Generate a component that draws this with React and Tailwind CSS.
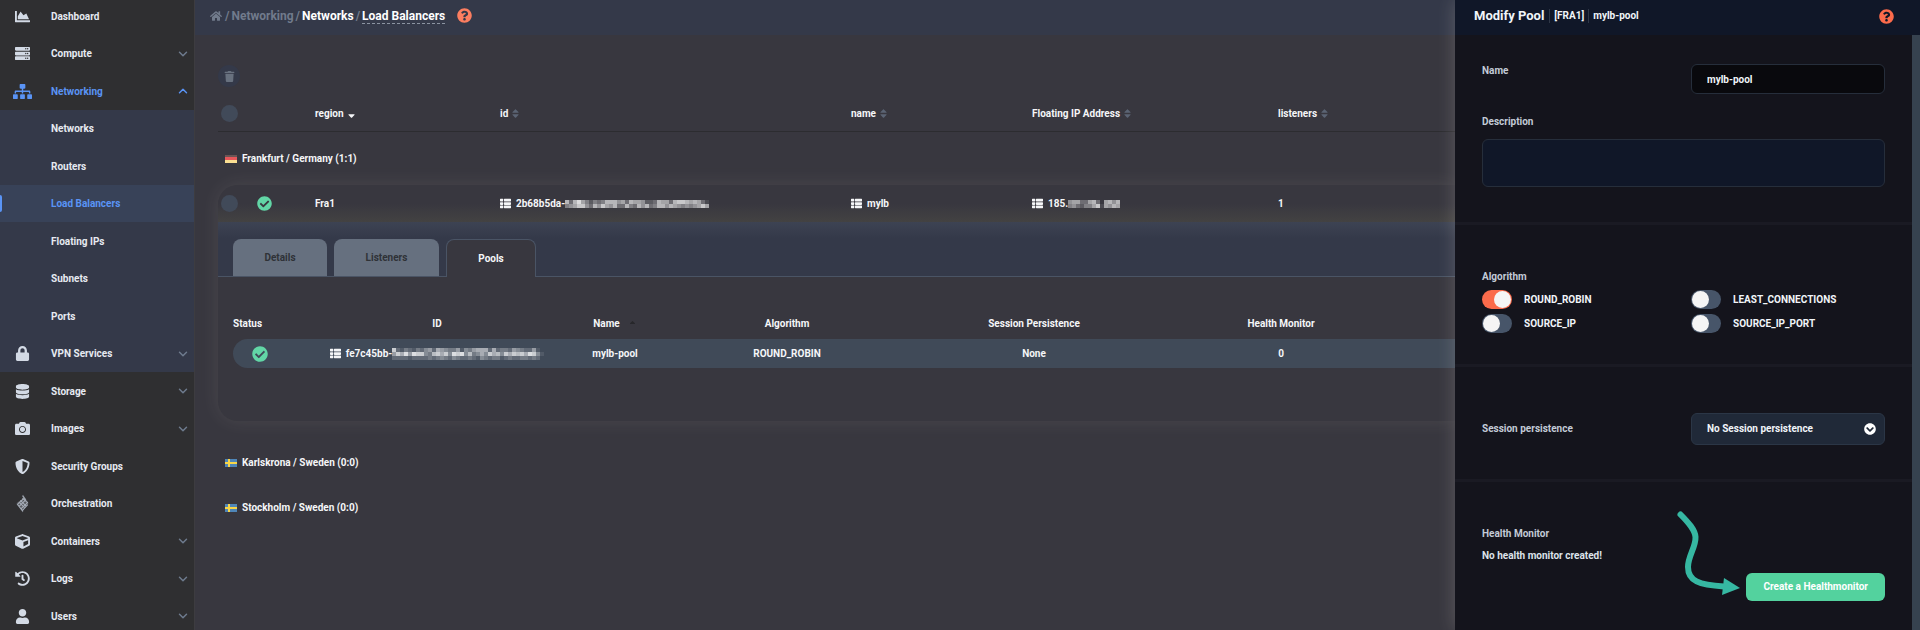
import React from "react";
import {
  FaCamera,
  FaChartArea,
  FaCheckCircle,
  FaChevronCircleDown,
  FaCube,
  FaDatabase,
  FaHistory,
  FaHome,
  FaLock,
  FaQuestionCircle,
  FaServer,
  FaShieldAlt,
  FaSitemap,
  FaSort,
  FaSortDown,
  FaSortUp,
  FaThList,
  FaTrash,
  FaUser,
} from "react-icons/fa";
import { ChevronDown, ChevronUp } from "lucide-react";

/* Woven diamond mark used for orchestration. */
function Weave({ className }) {
  return (
    <svg viewBox="0 0 24 36" className={className} fill="none" stroke="currentColor" strokeWidth="2">
      <path d="M13 1 L13 9 L1 17 L1 20 L12 34 L13 35 L13 28 L23 19 L23 16 Z" fill="currentColor" fillOpacity=".35" stroke="none" />
      <path d="M12 3 L18 11 M12 8 L22 17 M8 12 L19 23 M5 15 L16 26 M2 19 L13 33" />
      <path d="M14 9 L3 19 M18 11 L6 23 M22 16 L9 28 M22 20 L12 31" />
    </svg>
  );
}

const NAV = [
  { label: "Dashboard", Icon: FaChartArea },
  { label: "Compute", Icon: FaServer, arrow: "down" },
  { label: "Networking", Icon: FaSitemap, arrow: "up", open: true },
  { label: "Networks", group: true },
  { label: "Routers", group: true },
  { label: "Load Balancers", group: true, current: true },
  { label: "Floating IPs", group: true },
  { label: "Subnets", group: true },
  { label: "Ports", group: true },
  { label: "VPN Services", Icon: FaLock, arrow: "down", group: true },
  { label: "Storage", Icon: FaDatabase, arrow: "down" },
  { label: "Images", Icon: FaCamera, arrow: "down" },
  { label: "Security Groups", Icon: FaShieldAlt },
  { label: "Orchestration", Icon: Weave },
  { label: "Containers", Icon: FaCube, arrow: "down" },
  { label: "Logs", Icon: FaHistory, arrow: "down" },
  { label: "Users", Icon: FaUser, arrow: "down" },
];

function Sidebar() {
  return (
    <nav className="w-[195px] shrink-0 overflow-hidden border-r border-[#3d3c40] bg-[#2f2f31]">
      <ul className="-mt-[3px]">
        {NAV.map(({ label, Icon, arrow, open, group, current }) => (
          <li
            key={label}
            className={`odd:h-[38px] even:h-[37px] ${current ? "bg-[#384258]" : group ? "bg-[#343949]" : ""}`}
          >
            <a
              href="#"
              className={`relative flex h-full items-center pr-[4px] ${open || current ? "text-[#5a94f5]" : "text-[#e6eaf1]"}`}
            >
              {current && <span className="absolute bottom-[10px] left-0 h-[17px] w-[2px] rounded-r bg-[#5a94f5]" />}
              <span className={`flex w-[45px] justify-center ${open ? "" : "text-[#d3dae5]"}`}>
                {Icon &&
                  (Icon === Weave ? (
                    <Weave className="h-[19px] w-[13px] text-[#a6adb8]" />
                  ) : (
                    <Icon className={open ? "size-[19px]" : "size-[15px]"} />
                  ))}
              </span>
              <span className="grow pt-px pl-[6px]">{label}</span>
              {arrow === "down" && <ChevronDown className="size-[14px] text-[#6e7b8e]" strokeWidth={2.5} />}
              {arrow === "up" && <ChevronUp className="size-[14px]" strokeWidth={2.5} />}
            </a>
          </li>
        ))}
      </ul>
    </nav>
  );
}

const ID_MASK = [
  [7, 3, 7, 9, 6, 4, 2, 4, 3, 4, 7, 7, 7, 5, 6, 3, 7, 6, 6, 5, 2, 2, 3, 7, 6, 6, 3, 7, 8, 8, 7, 6, 7, 6, 3, 1],
  [4, 5, 6, 8, 8, 5, 3, 7, 5, 8, 6, 5, 7, 3, 3, 7, 4, 3, 7, 5, 7, 3, 4, 7, 7, 5, 7, 6, 5, 4, 5, 4, 5, 6, 8, 6],
];
const POOL_MASK = [
  [8, 2, 1, 3, 2, 1, 3, 2, 4, 5, 2, 6, 5, 4, 3, 3, 5, 1, 4, 3, 5, 6, 6, 6, 2, 6, 2, 3, 3, 2, 5, 4, 3, 2, 2, 5, 1, 0],
  [5, 8, 6, 9, 5, 9, 8, 8, 4, 3, 7, 8, 6, 8, 4, 9, 8, 9, 4, 7, 3, 4, 6, 4, 8, 6, 7, 4, 8, 6, 8, 7, 8, 6, 9, 8, 4, 1],
  [2, 2, 2, 2, 1, 2, 2, 2, 2, 3, 2, 3, 4, 3, 2, 4, 3, 2, 2, 3, 2, 1, 4, 3, 2, 3, 3, 1, 2, 3, 2, 2, 3, 3, 2, 3, 2, 0],
];
const IP_MASK = [
  [5, 6, 6, 3, 3, 6, 7, 3, 0, 6, 7, 5, 7],
  [4, 5, 3, 2, 4, 4, 6, 8, 1, 6, 5, 7, 6],
];

/* Coarse blocks that hide the private tail of an address. */
function Mask({ rows, cell }) {
  const cols = rows[0].length;
  return (
    <svg width={cols * cell} height={rows.length * 4} className="shrink-0" aria-hidden="true" shapeRendering="crispEdges">
      {rows.map((row, y) =>
        row.map((v, x) => (
          <rect key={`${y}-${x}`} x={x * cell} y={y * 4} width={cell} height={4} fill="#fff" opacity={v / 11} />
        ))
      )}
    </svg>
  );
}

const GRID = "grid grid-cols-[36px_61px_185fr_351fr_181fr_246fr_177fr] items-center";
const POOL_GRID = "grid grid-cols-[53px_302fr_54fr_290fr_204fr_290fr_29fr] items-center";

function Flag({ country }) {
  return country === "de" ? (
    <svg width="12" height="8" viewBox="0 0 12 8">
      <rect width="12" height="3" fill="#6b5555" />
      <rect y="2" width="12" height="4" fill="#e8575a" />
      <rect y="5" width="12" height="3" fill="#fbdf92" />
    </svg>
  ) : (
    <svg width="12" height="8" viewBox="0 0 12 8">
      <rect width="12" height="8" fill="#4f86b8" />
      <path d="M3 0h2v3h7v2H5v3H3V5H0V3h3z" fill="#f8d648" />
    </svg>
  );
}

function GroupRow({ country, children }) {
  return (
    <tr className="flex h-[45px] items-center">
      <th className="flex items-center gap-[5px] pl-[7px] font-[inherit]">
        <Flag country={country} />
        {children}
      </th>
    </tr>
  );
}

function SortHead({ children, active }) {
  return (
    <th className="text-left font-[inherit]">
      <button className="flex items-center gap-[2px]">
        {children}
        {active ? <FaSortDown className="size-[11px]" /> : <FaSort className="size-[11px] text-[#5b6474]" />}
      </button>
    </th>
  );
}

function Tick({ label }) {
  return (
    <input
      type="checkbox"
      aria-label={label}
      className="ml-[3px] block size-[17px] appearance-none rounded-full bg-[#414a59]"
    />
  );
}

function LinkCell({ text, rows, cell }) {
  return (
    <a href="#" className="flex items-center gap-[5px]">
      <FaThList className="size-[11px]" />
      <span className="flex items-center">
        {text}
        {rows && <Mask rows={rows} cell={cell} />}
      </span>
    </a>
  );
}

function Pools() {
  return (
    <>
      <div
        role="tablist"
        className="flex h-[55px] items-end gap-[7px] border-b border-[#4a5465] bg-linear-to-b from-[#3d4353] to-[#343949] to-30% pl-[15px]"
      >
        <button role="tab" className="h-[37px] w-[94px] rounded-t-lg bg-[#66707f] text-[#2f3237]">
          Details
        </button>
        <button role="tab" className="h-[37px] w-[105px] rounded-t-lg bg-[#66707f] text-[#2f3237]">
          Listeners
        </button>
        <button
          role="tab"
          aria-selected="true"
          className="-mb-px h-[38px] w-[90px] rounded-t-lg border border-b-0 border-[#4a5465] bg-[#38373f]"
        >
          Pools
        </button>
      </div>
      <div className="pt-[40px] pb-[53px] pl-[15px]">
        <table className="block text-center">
          <thead className="block">
            <tr className={`${POOL_GRID} h-[22px] items-start leading-[14px]`}>
              <th className="text-left font-[inherit]">Status</th>
              <th className="font-[inherit]">ID</th>
              <th className="flex justify-center gap-[8px] font-[inherit]">
                Name
                <FaSortUp className="mt-[3px] size-[9px] text-[#27272b]" />
              </th>
              <th className="font-[inherit]">Algorithm</th>
              <th className="font-[inherit]">Session Persistence</th>
              <th className="font-[inherit]">Health Monitor</th>
            </tr>
          </thead>
          <tbody className="block">
            <tr className={`${POOL_GRID} h-[29px] rounded-l-full bg-[#404a58]`}>
              <td className="flex justify-center">
                <FaCheckCircle className="size-4 text-[#62d6a6]" />
              </td>
              <td className="flex justify-center">
                <LinkCell text="fe7c45bb-" rows={POOL_MASK} cell={4} />
              </td>
              <td className="whitespace-nowrap">mylb-pool</td>
              <td>ROUND_ROBIN</td>
              <td>None</td>
              <td>0</td>
            </tr>
          </tbody>
        </table>
      </div>
    </>
  );
}

function Main() {
  return (
    <main className="min-w-0 grow overflow-hidden bg-[#38373f]">
      <header className="flex h-[35px] items-center bg-[#343949] pb-[4px] pl-[15px] text-[12px]">
        <nav className="flex items-center gap-[2px] text-[#717b8c]">
          <FaHome className="mr-px size-[12px]" />
          <span>/</span>
          <a href="#">Networking</a>
          <span>/</span>
          <a href="#" className="text-white">Networks</a>
          <span>/</span>
          <a href="#" className="-mb-px border-b border-dashed border-[#8b93a1] text-white">Load Balancers</a>
        </nav>
        <button aria-label="Help" className="ml-[12px]">
          <FaQuestionCircle className="size-[15px] text-[#fc7e60]" />
        </button>
      </header>

      <div className="pt-[30px] pl-[23px]">
        <button aria-label="Delete" className="flex size-[22px] items-center justify-center rounded-full bg-[#343949]">
          <FaTrash className="size-[11px] text-[#68717f]" />
        </button>

        <table className="mt-[9px] block">
          <thead className="block">
            <tr className={`${GRID} h-[36px] border-b border-[#2c2c30]`}>
              <td>
                <Tick label="Select all" />
              </td>
              <td />
              <SortHead active>region</SortHead>
              <SortHead>id</SortHead>
              <SortHead>name</SortHead>
              <SortHead>Floating IP Address</SortHead>
              <SortHead>listeners</SortHead>
            </tr>
          </thead>
          <tbody className="block pt-[4px] pb-[4px]">
            <GroupRow country="de">Frankfurt / Germany (1:1)</GroupRow>
          </tbody>
          <tbody className="block overflow-visible rounded-l-[20px] bg-[#38373f] shadow-[0_0_20px_rgba(255,240,220,0.09)]">
            <tr className={`${GRID} h-[37px] rounded-tl-[20px] bg-linear-to-b from-[#38373f] from-50% to-[#434242]`}>
              <td>
                <Tick label="Select mylb" />
              </td>
              <td>
                <FaCheckCircle className="ml-[3px] size-[15px] text-[#62d6a6]" />
              </td>
              <td>Fra1</td>
              <td>
                <LinkCell text="2b68b5da-" rows={ID_MASK} cell={4} />
              </td>
              <td>
                <LinkCell text="mylb" />
              </td>
              <td>
                <LinkCell text="185." rows={IP_MASK} cell={4} />
              </td>
              <td>1</td>
            </tr>
            <tr className="block">
              <td className="block">
                <Pools />
              </td>
            </tr>
          </tbody>
          <tbody className="block pt-[19px]">
            <GroupRow country="se">Karlskrona / Sweden (0:0)</GroupRow>
            <GroupRow country="se">Stockholm / Sweden (0:0)</GroupRow>
          </tbody>
        </table>
      </div>
    </main>
  );
}

function Toggle({ label, on }) {
  return (
    <label className="flex items-center gap-[12px]">
      <input
        type="checkbox"
        defaultChecked={on}
        className="block h-[19px] w-[30px] appearance-none rounded-full bg-[#475569] p-px before:block before:size-[17px] before:rounded-full before:bg-[#f5f5f5] before:content-[''] checked:bg-[#fb6b4b] checked:before:ml-[11px]"
      />
      {label}
    </label>
  );
}

function Drawer() {
  return (
    <aside className="relative z-10 flex w-[465px] shrink-0 flex-col bg-[#14141c] leading-[14px] text-[#f1f5f9] shadow-[0_0_18px_rgba(255,245,230,0.2)]">
      <header className="flex h-[35px] shrink-0 items-center bg-[#101728] pr-[26px] pb-[3px] pl-[19px]">
        <h1 className="pr-[5px] text-[13px]">Modify Pool</h1>
        <span className="border-l border-[#2f3747] px-[4px]">[FRA1]</span>
        <span className="border-l border-[#2f3747] px-[4px]">mylb-pool</span>
        <button aria-label="Help" className="ml-auto">
          <FaQuestionCircle className="size-[15px] text-[#fc6b4b]" />
        </button>
      </header>
      <div className="flex min-h-0 grow">
        <form className="min-w-0 grow overflow-hidden text-[#f1f5f9]">
          <section className="border-b-[3px] border-[#1a1a23] px-[27px] pt-[29px] pb-[35px]">
            <div className="grid grid-cols-2 gap-x-[15px]">
              <label htmlFor="pool-name" className="text-[#c3cbd7]">Name</label>
              <input
                id="pool-name"
                defaultValue="mylb-pool"
                className="h-[30px] min-w-0 rounded-md border border-[#262e3b] bg-[#09090d] px-[15px]"
              />
            </div>
            <label htmlFor="pool-description" className="mt-[21px] block text-[#c3cbd7]">Description</label>
            <textarea
              id="pool-description"
              className="mt-[10px] block h-[48px] w-full resize-none rounded-md border border-[#262e3b] bg-[#101728] px-[15px]"
            />
          </section>

          <section className="border-b-[3px] border-[#1a1a23] px-[27px] pt-[45px] pb-[31px]">
            <h2 className="text-[#c3cbd7]">Algorithm</h2>
            <div className="mt-[6px] grid grid-cols-2 gap-x-[15px] gap-y-[5px]">
              <Toggle label="ROUND_ROBIN" on />
              <Toggle label="LEAST_CONNECTIONS" />
              <Toggle label="SOURCE_IP" />
              <Toggle label="SOURCE_IP_PORT" />
            </div>
          </section>

          <section className="grid grid-cols-2 items-center gap-x-[15px] border-b-[3px] border-[#1a1a23] px-[27px] pt-[46px] pb-[34px]">
            <label htmlFor="session" className="text-[#c3cbd7]">Session persistence</label>
            <span className="relative flex items-center">
              <select
                id="session"
                className="h-[32px] w-full appearance-none rounded-md border border-[#2b3646] bg-[#202938] px-[15px]"
              >
                <option>No Session persistence</option>
              </select>
              <FaChevronCircleDown className="pointer-events-none absolute right-[9px] size-[12px] text-white" />
            </span>
          </section>

          <section className="flex flex-col px-[27px] pt-[45px]">
            <h2 className="text-[#c3cbd7]">Health Monitor</h2>
            <p className="mt-[8px] text-[#dde3ea]">No health monitor created!</p>
            <button
              type="button"
              className="relative mt-[10px] h-[28px] self-end rounded-md bg-[#53d29e] px-[17px] text-white"
            >
              Create a Healthmonitor
              <svg
                viewBox="0 0 66 86"
                className="absolute right-full bottom-[6px] mr-[5px] h-[86px] w-[66px]"
                fill="none"
                stroke="#36b8a2"
                aria-hidden="true"
              >
                <path
                  d="M5.500 5.500C14 14 20 21 20.500 28C21 38 13 47 13 58C13 72 24 76 49 77.500"
                  strokeWidth="6"
                  strokeLinecap="round"
                />
                <path d="M49 69L65 79L47 86Z" fill="#36b8a2" stroke="none" />
              </svg>
            </button>
          </section>
        </form>
        <div className="w-[8px] bg-[#36424f]" />
      </div>
    </aside>
  );
}

export default function App() {
  return (
    <div className="flex h-screen overflow-hidden bg-[#38373f] font-['Roboto',sans-serif] text-[10px] leading-[14px] font-bold text-[#f5f6f8]">
      <Sidebar />
      <Main />
      <Drawer />
    </div>
  );
}
